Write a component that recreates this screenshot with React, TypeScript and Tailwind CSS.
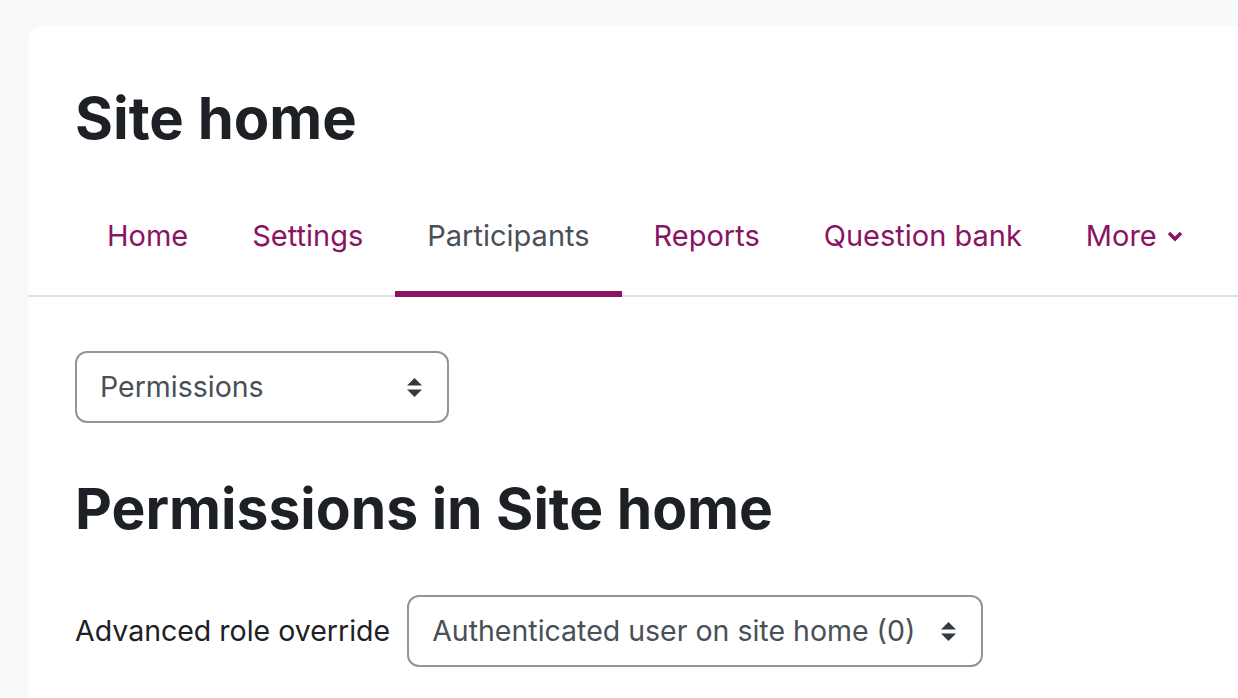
import React from 'react';

const tabs = [
  { label: 'Home' },
  { label: 'Settings' },
  { label: 'Participants', active: true },
  { label: 'Reports' },
  { label: 'Question bank' },
];

// up/down arrows used by the select boxes
const SortArrows = () => (
  <svg width="17" height="21" viewBox="0 0 17 21" className="shrink-0">
    <path d="M8.5 1 L16 8.5 H1 Z" fill="#343a40" />
    <path d="M8.5 20 L16 12.5 H1 Z" fill="#343a40" />
  </svg>
);

const Select: React.FC<{ value: string; className?: string }> = ({ value, className }) => (
  <div
    className={`h-[72px] flex items-center justify-between gap-[18px] border-2 border-[#8f959e] rounded-[12px] bg-white pl-[23px] pr-[24px] text-[28.5px] text-[#495057] whitespace-nowrap ${className ?? ''}`}
  >
    <span>{value}</span>
    <SortArrows />
  </div>
);

export default function App() {
  return (
    <div
      className="h-[698px] w-[1238px] overflow-hidden bg-[#f8f9fa] pl-[28px] pt-[26px]"
      style={{ fontFamily: 'Inter, "Noto Sans", sans-serif' }}
    >
      <div className="w-[1300px] min-h-[800px] bg-white rounded-tl-[16px]">
        {/* Page header */}
        <div className="pl-[47px] pt-[56px]">
          <h1 className="text-[58px] leading-[72px] font-bold text-[#1d2125]">Site home</h1>
        </div>

        {/* Secondary navigation */}
        <nav className="mt-[23px] border-b-2 border-[#dee2e6]">
          <ul className="flex pl-[47px]">
            {tabs.map((t) => (
              <li key={t.label} className="relative">
                <a
                  className={`h-[118px] px-[32px] flex items-center text-[29px] ${
                    t.active ? 'text-[#495057]' : 'text-[#8a1461]'
                  }`}
                >
                  {t.label}
                </a>
                {t.active && (
                  <span className="absolute left-0 right-0 bottom-[-2px] h-[6px] bg-[#8a1461]" />
                )}
              </li>
            ))}
            <li>
              <a className="h-[118px] px-[32px] flex items-center gap-[10px] text-[29px] text-[#8a1461]">
                More
                <svg width="16" height="12" viewBox="0 0 16 12">
                  <path d="M2 3 L8 9 L14 3" fill="none" stroke="#8a1461" strokeWidth="3.5" />
                </svg>
              </a>
            </li>
          </ul>
        </nav>

        {/* Main content */}
        <div className="pl-[47px] pt-[54px]">
          <Select value="Permissions" className="w-[374px]" />

          <h2 className="mt-[51px] text-[57px] leading-[70px] font-bold text-[#1d2125]">
            Permissions in Site home
          </h2>

          <div className="mt-[51px] flex items-center gap-[17px]">
            <label className="text-[28.5px] text-[#1d2125]">Advanced role override</label>
            <Select value="Authenticated user on site home (0)" className="w-[576px]" />
          </div>
        </div>
      </div>
    </div>
  );
}
